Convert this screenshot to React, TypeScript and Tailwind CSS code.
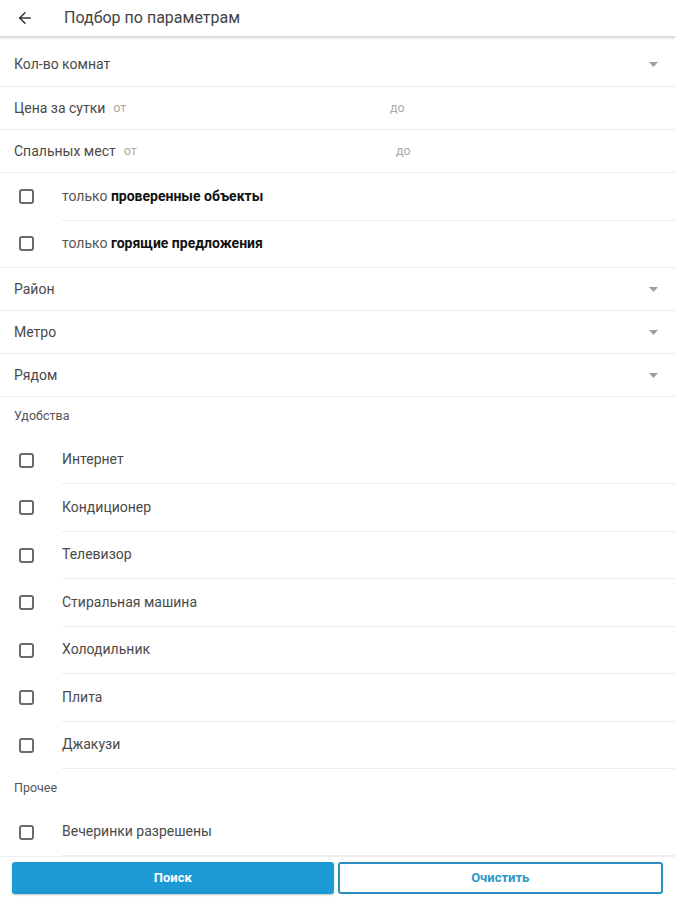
import { ArrowLeft } from "lucide-react";

const font = { fontFamily: "Roboto, 'Noto Sans', sans-serif" };

function Caret() {
  return (
    <svg width="9" height="5" viewBox="0 0 9 5" className="shrink-0">
      <path d="M0 0h9L4.5 5z" fill="#9e9e9e" />
    </svg>
  );
}

function SelectRow({ label, first }: { label: string; first?: boolean }) {
  return (
    <div
      className={`flex items-center justify-between border-b border-[#ececec] pl-[14px] pr-[17px] ${
        first ? "h-[49px] pt-[4px]" : "h-[43px]"
      }`}
    >
      <span className="text-[14px] text-[#4a4a4a]">{label}</span>
      <Caret />
    </div>
  );
}

function RangeRow({ label, split }: { label: string; split: string }) {
  return (
    <div className="flex h-[43px] items-center border-b border-[#ececec] pl-[14px]">
      <div className={`flex items-center gap-[8px] ${split}`}>
        <span className="text-[14px] text-[#4a4a4a]">{label}</span>
        <span className="text-[12.5px] text-[#aaa]">от</span>
      </div>
      <span className="text-[12.5px] text-[#aaa]">до</span>
    </div>
  );
}

function Box() {
  return <span className="h-[15px] w-[15px] shrink-0 rounded-[3px] border-2 border-[#6b6b6b]" />;
}

function CheckRow({ children, last }: { children: React.ReactNode; last?: boolean }) {
  return (
    <div className={`flex h-[47.5px] items-center ${last ? "border-b border-[#ececec]" : ""}`}>
      <div className="flex w-[62px] justify-center pr-[10px]">
        <Box />
      </div>
      <div
        className={`flex h-full flex-1 items-center text-[14px] text-[#4a4a4a] ${
          last ? "" : "border-b border-[#ececec]"
        }`}
      >
        {children}
      </div>
    </div>
  );
}

function SectionLabel({ label }: { label: string }) {
  return (
    <div className="flex h-[39.5px] items-center pl-[14px] text-[12.5px] text-[#555]">{label}</div>
  );
}

const amenities = [
  "Интернет",
  "Кондиционер",
  "Телевизор",
  "Стиральная машина",
  "Холодильник",
  "Плита",
  "Джакузи",
];

export default function App() {
  return (
    <div className="flex h-[900px] w-[675px] flex-col overflow-hidden bg-white" style={font}>
      <header className="flex h-[38px] shrink-0 items-center border-b-2 border-[#dcdcdc] shadow-[0_1px_2px_rgba(0,0,0,0.08)]">
        <div className="flex w-[64px] justify-center pr-[14px]">
          <ArrowLeft size={18} strokeWidth={2} color="#333" />
        </div>
        <span className="text-[16px] text-[#444]">Подбор по параметрам</span>
      </header>

      <main className="flex-1">
        <SelectRow label="Кол-во комнат" first />
        <RangeRow label="Цена за сутки" split="w-[376px]" />
        <RangeRow label="Спальных мест" split="w-[382px]" />
        <CheckRow>
          <span className="text-[#555]">только&nbsp;</span>
          <b className="font-bold text-[#111]">проверенные объекты</b>
        </CheckRow>
        <CheckRow last>
          <span className="text-[#555]">только&nbsp;</span>
          <b className="font-bold text-[#111]">горящие предложения</b>
        </CheckRow>
        <SelectRow label="Район" />
        <SelectRow label="Метро" />
        <SelectRow label="Рядом" />
        <SectionLabel label="Удобства" />
        {amenities.map((a) => (
          <CheckRow key={a}>{a}</CheckRow>
        ))}
        <SectionLabel label="Прочее" />
        <CheckRow>Вечеринки разрешены</CheckRow>
      </main>

      <footer className="flex h-[44px] shrink-0 items-start gap-[4px] border-t border-[#eeeeee] px-[12px] pt-[5px]">
        <button className="h-[32px] flex-1 rounded-[3px] bg-[#1b9ad6] text-[13px] font-bold text-white shadow-[0_1px_2px_rgba(0,0,0,0.25)]">
          Поиск
        </button>
        <button className="h-[32px] flex-1 rounded-[3px] border-2 border-[#2a8fbd] bg-white text-[13px] font-bold text-[#2b97c9]">
          Очистить
        </button>
      </footer>
    </div>
  );
}
